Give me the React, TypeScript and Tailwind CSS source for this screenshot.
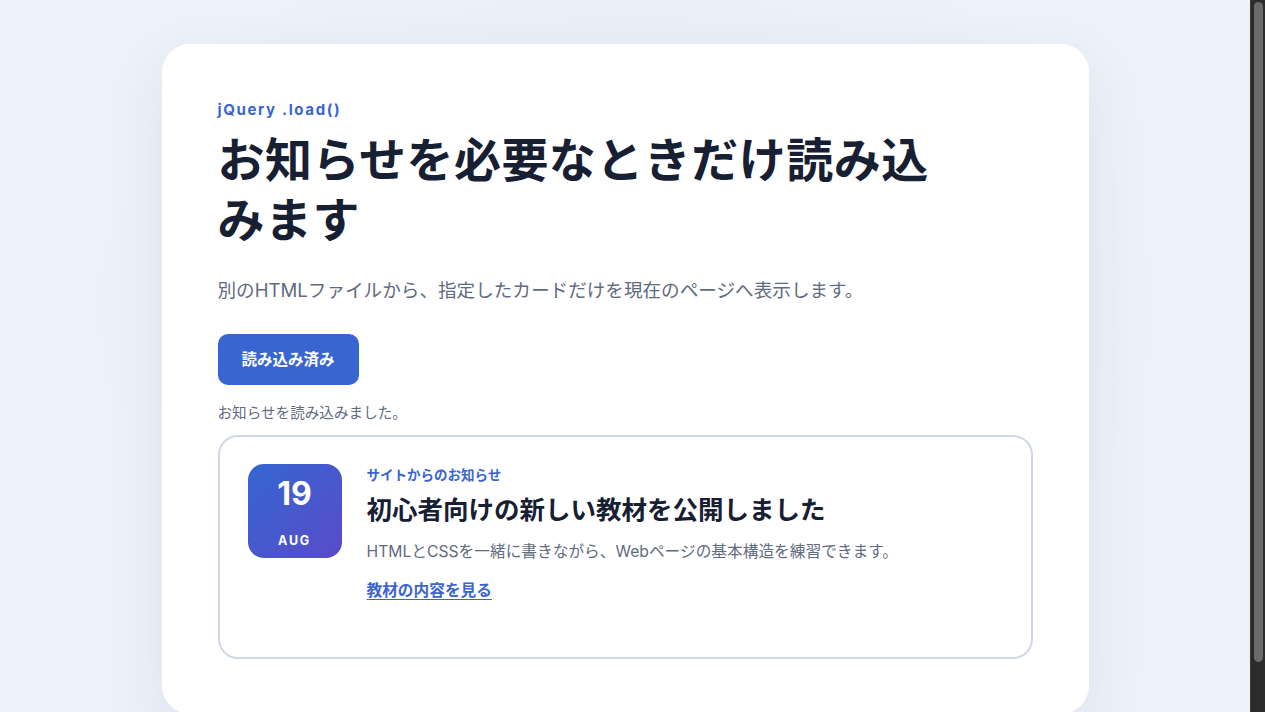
import React from "react";

export default function App() {
  return (
    <div className="flex h-screen overflow-hidden bg-[#edf1f9] text-[#172033] font-['Inter','Noto_Sans_CJK_JP',sans-serif]">
      <div className="h-full flex-1 overflow-hidden">
        <div className="min-h-full bg-[radial-gradient(ellipse_at_50%_40%,#e4e9f3_0%,#edf1f9_60%)] pt-[44px] pb-[52px]">
          <main className="mx-auto w-[927px] rounded-[28px] bg-white px-[56px] pt-[56px] pb-[55px] shadow-[0_20px_60px_rgba(30,50,100,0.08)]">
            <p className="text-[15px] font-bold leading-[20px] tracking-[0.11em] text-[#3a65cf]">jQuery .load()</p>
            <h1 className="mt-[10px] max-w-[720px] text-[47px] font-bold leading-[60px] tracking-[0.01em] text-[#172033]">
              お知らせを必要なときだけ読み込みます
            </h1>
            <p className="mt-[26px] text-[18.6px] leading-[28px] text-[#5f6b80]">
              別のHTMLファイルから、指定したカードだけを現在のページへ表示します。
            </p>
            <button className="mt-[30px] flex h-[51px] items-center rounded-[10px] bg-[#3965d0] px-[24px] text-[15.5px] font-bold text-white">
              読み込み済み
            </button>
            <p className="mt-[18px] text-[14.6px] leading-[20px] text-[#5f6b80]">お知らせを読み込みました。</p>
            <section className="mt-[12px] flex min-h-[224px] gap-[25px] rounded-[20px] border-2 border-[#cfd8e6] bg-white px-[28px] pt-[27px] pb-[28px]">
              <div className="flex h-[94px] w-[94px] shrink-0 flex-col items-center rounded-[16px] bg-[linear-gradient(135deg,#3466d1_0%,#5a4bc9_100%)] pt-[11px] text-white">
                <span className="text-[32px] font-bold leading-[38px]">19</span>
                <span className="mt-[20px] text-[12.5px] font-bold leading-[16px] tracking-[0.14em]">AUG</span>
              </div>
              <div className="flex flex-col">
                <p className="mt-[1px] text-[13.5px] font-bold leading-[20px] text-[#3a65cf]">サイトからのお知らせ</p>
                <h2 className="mt-[8px] text-[25.5px] font-bold leading-[34px] text-[#172033]">初心者向けの新しい教材を公開しました</h2>
                <p className="mt-[14px] text-[15.7px] leading-[22px] text-[#5f6b80]">
                  HTMLとCSSを一緒に書きながら、Webページの基本構造を練習できます。
                </p>
                <a href="#" className="mt-[17px] self-start text-[15.7px] font-bold leading-[22px] text-[#3a65cf] underline underline-offset-[3px]">
                  教材の内容を見る
                </a>
              </div>
            </section>
          </main>
        </div>
      </div>
      <aside className="flex h-full w-[15px] shrink-0 justify-center border-l border-[#3c3c3c] bg-[#2b2b2b] pt-[2px]">
        <div className="h-[660px] w-[9px] rounded-full bg-[#6b6b6b]" />
      </aside>
    </div>
  );
}
